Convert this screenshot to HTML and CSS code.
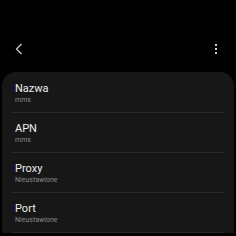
FILE: index.html
```html
<!DOCTYPE html>
<html lang="pl">
<head>
    <meta charset="UTF-8">
    <meta name="viewport" content="width=device-width, initial-scale=1.0">
    <title>APN</title>
    <link rel="stylesheet" href="styles.css">
</head>
<body>
    <div class="toolbar">
        <svg class="back" width="8" height="12" viewBox="0 0 8 12">
            <polyline points="6.5,1 1.5,6 6.5,11" fill="none" stroke="#d0d0d0" stroke-width="1.2"></polyline>
        </svg>
        <div class="more">
            <span></span><span></span><span></span>
        </div>
    </div>

    <div class="card">
        <div class="row">
            <div class="title">Nazwa</div>
            <div class="value">mms</div>
        </div>
        <div class="row">
            <div class="title">APN</div>
            <div class="value">mms</div>
        </div>
        <div class="row">
            <div class="title">Proxy</div>
            <div class="value">Nieustawione</div>
        </div>
        <div class="row">
            <div class="title">Port</div>
            <div class="value">Nieustawione</div>
        </div>
    </div>
</body>
</html>
```

FILE: styles.css
```css
* {
    margin: 0;
    padding: 0;
    box-sizing: border-box;
}

body {
    font-family: Roboto, "Noto Sans", sans-serif;
    background-color: #000;
    width: 236px;
    height: 236px;
    overflow: hidden;
}

.toolbar {
    height: 72px;
    display: flex;
    align-items: center;
    justify-content: space-between;
    padding: 26px 19px 0 15px;
}

.back {
    display: block;
}

.more {
    display: flex;
    flex-direction: column;
    gap: 2px;
}

.more span {
    width: 2px;
    height: 2px;
    background-color: #d0d0d0;
}

.card {
    margin: 0 2px;
    background-color: #171717;
    border-radius: 14px 14px 0 0;
    padding-top: 1px;
}

.row {
    height: 40px;
    margin: 0 11px 0 10px;
    padding: 9px 3px 0;
    border-bottom: 1px solid #2a2a2a;
}

.title {
    font-size: 11px;
    line-height: 14px;
    color: #ececec;
}

.value {
    font-size: 7px;
    line-height: 9px;
    color: #8a8a8a;
}
```
